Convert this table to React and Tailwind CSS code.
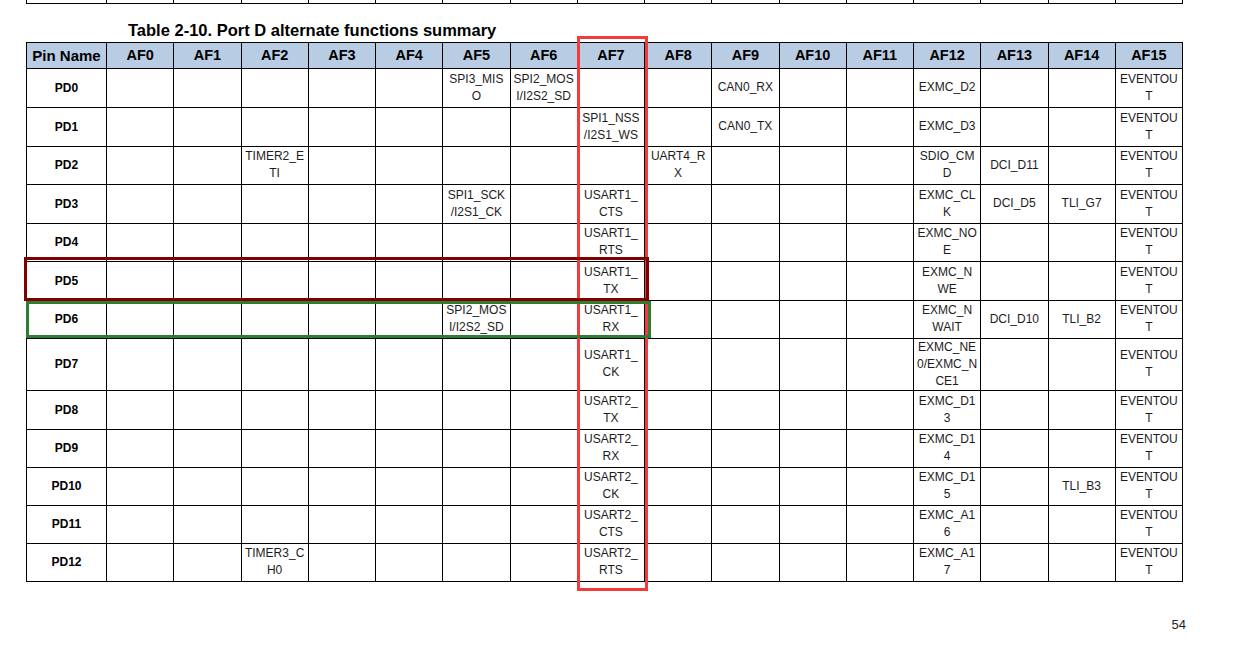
const cols = ['AF0', 'AF1', 'AF2', 'AF3', 'AF4', 'AF5', 'AF6', 'AF7', 'AF8', 'AF9', 'AF10', 'AF11', 'AF12', 'AF13', 'AF14', 'AF15']

const EV = ['EVENTOU', 'T']

// cells keyed by column index, each value = the wrapped lines as printed
const rows = [
  { pin: 'PD0', h: 39, cells: { 5: ['SPI3_MIS', 'O'], 6: ['SPI2_MOS', 'I/I2S2_SD'], 9: ['CAN0_RX'], 12: ['EXMC_D2'], 15: EV } },
  { pin: 'PD1', h: 39, cells: { 7: ['SPI1_NSS', '/I2S1_WS'], 9: ['CAN0_TX'], 12: ['EXMC_D3'], 15: EV } },
  { pin: 'PD2', h: 38, cells: { 2: ['TIMER2_E', 'TI'], 8: ['UART4_R', 'X'], 12: ['SDIO_CM', 'D'], 13: ['DCI_D11'], 15: EV } },
  { pin: 'PD3', h: 39, cells: { 5: ['SPI1_SCK', '/I2S1_CK'], 7: ['USART1_', 'CTS'], 12: ['EXMC_CL', 'K'], 13: ['DCI_D5'], 14: ['TLI_G7'], 15: EV } },
  { pin: 'PD4', h: 38, cells: { 7: ['USART1_', 'RTS'], 12: ['EXMC_NO', 'E'], 15: EV } },
  { pin: 'PD5', h: 39, cells: { 7: ['USART1_', 'TX'], 12: ['EXMC_N', 'WE'], 15: EV } },
  { pin: 'PD6', h: 38, cells: { 5: ['SPI2_MOS', 'I/I2S2_SD'], 7: ['USART1_', 'RX'], 12: ['EXMC_N', 'WAIT'], 13: ['DCI_D10'], 14: ['TLI_B2'], 15: EV } },
  { pin: 'PD7', h: 50, cells: { 7: ['USART1_', 'CK'], 12: ['EXMC_NE', '0/EXMC_N', 'CE1'], 15: EV } },
  { pin: 'PD8', h: 39, cells: { 7: ['USART2_', 'TX'], 12: ['EXMC_D1', '3'], 15: EV } },
  { pin: 'PD9', h: 38, cells: { 7: ['USART2_', 'RX'], 12: ['EXMC_D1', '4'], 15: EV } },
  { pin: 'PD10', h: 38, cells: { 7: ['USART2_', 'CK'], 12: ['EXMC_D1', '5'], 14: ['TLI_B3'], 15: EV } },
  { pin: 'PD11', h: 38, cells: { 7: ['USART2_', 'CTS'], 12: ['EXMC_A1', '6'], 15: EV } },
  { pin: 'PD12', h: 38, cells: { 2: ['TIMER3_C', 'H0'], 7: ['USART2_', 'RTS'], 12: ['EXMC_A1', '7'], 15: EV } },
]

function Cols() {
  return (
    <colgroup>
      <col className="w-[80px]" />
      {cols.map(c => (
        <col key={c} className="w-[67.25px]" />
      ))}
    </colgroup>
  )
}

function Lines({ lines }) {
  if (!lines) return null
  return lines.map((l, i) => (
    <span key={i} className="block">{l}</span>
  ))
}

export default function App() {
  return (
    <div className="relative w-[1236px] h-[649px] bg-white overflow-hidden font-['Liberation_Sans',Arial,sans-serif] text-[#111]">
      {/* tail of the previous table */}
      <table className="ml-[26px] w-[1156px] table-fixed border-collapse">
        <Cols />
        <tbody>
          <tr>
            <td className="h-[3px] p-0 border-x border-b border-black" />
            {cols.map(c => (
              <td key={c} className="h-[3px] p-0 border-x border-b border-black" />
            ))}
          </tr>
        </tbody>
      </table>

      <p className="mt-[16px] pl-[128px] h-[20px] leading-[20px] text-[16.5px] font-bold text-black">
        Table 2-10. Port D alternate functions summary
      </p>

      <table className="mt-[2px] ml-[26px] w-[1156px] table-fixed border-collapse">
        <Cols />
        <thead>
          <tr className="bg-[#b8cce4]">
            <th className="h-[26px] p-0 border border-black text-[15px] font-bold leading-none text-black">Pin Name</th>
            {cols.map(c => (
              <th key={c} className="h-[26px] p-0 border border-black text-[14.5px] font-bold leading-none text-black">{c}</th>
            ))}
          </tr>
        </thead>
        <tbody>
          {rows.map(r => (
            <tr key={r.pin}>
              <td
                className="p-0 border border-black text-center align-middle text-[12px] font-bold text-black"
                style={{ height: r.h }}
              >
                {r.pin}
              </td>
              {cols.map((c, i) => (
                <td
                  key={c}
                  className="p-0 border border-black text-center align-middle text-[12px] leading-[17px] text-[#1c1c1c] whitespace-nowrap overflow-hidden"
                >
                  <Lines lines={r.cells[i]} />
                </td>
              ))}
            </tr>
          ))}
        </tbody>
      </table>

      <p className="mt-[35px] pr-[50px] text-right text-[13px] leading-[16px] text-[#222]">54</p>

      {/* annotation boxes drawn over the table */}
      <div className="absolute left-[577px] top-[36px] w-[71px] h-[555px] border-[3px] border-[#f03c3c] pointer-events-none" />
      <div className="absolute left-[24px] top-[257px] w-[625px] h-[44px] border-[3px] border-[#800000] pointer-events-none" />
      <div className="absolute left-[26px] top-[301px] w-[625px] h-[37px] border-[3px] border-[#2e7d32] pointer-events-none" />
    </div>
  )
}
